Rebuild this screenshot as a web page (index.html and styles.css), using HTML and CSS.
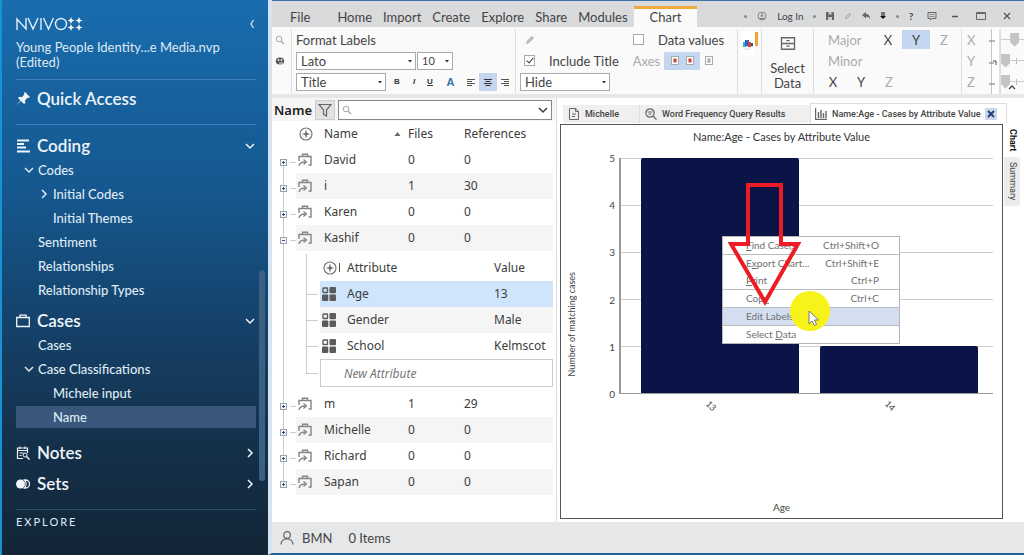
FILE: index.html
```html
<!DOCTYPE html>
<html lang="en">
<head>
<meta charset="utf-8">
<meta name="viewport" content="width=device-width, initial-scale=1">
<title>NVivo - Name:Age</title>
<link rel="stylesheet" href="styles.css">
</head>
<body>
<svg class="defs" aria-hidden="true">
  <symbol id="down" viewBox="0 0 10 10"><path d="M1 3l4 4 4-4" fill="none" stroke="currentColor" stroke-width="1.5"/></symbol>
  <symbol id="right" viewBox="0 0 10 10"><path d="M3 1l4 4-4 4" fill="none" stroke="currentColor" stroke-width="1.5"/></symbol>
  <symbol id="caret" viewBox="0 0 6 4"><path d="M1 1h4L3 3.500z" fill="#333"/></symbol>
  <symbol id="plus" viewBox="0 0 7 7"><rect x=".5" y=".5" width="6" height="6" fill="#f4f6fa" stroke="#9aa2b2"/><path d="M2 3.500h3M3.500 2v3" stroke="#34507c"/></symbol>
  <symbol id="minus" viewBox="0 0 7 7"><rect x=".5" y=".5" width="6" height="6" fill="#f4f6fa" stroke="#9aa2b2"/><path d="M2 3.500h3" stroke="#34507c"/></symbol>
  <symbol id="case" viewBox="0 0 14 14"><path d="M1 8V3.500h12V12h-2.500M4.500 3.500V1.200h5v2.300" fill="none" stroke="#858585" stroke-width="1.400"/><path d="M1 13c.5-3 2.500-4 6-4M5.500 6.500L8.500 9l-3 2.500" fill="none" stroke="#858585" stroke-width="1.300"/></symbol>
  <symbol id="attr" viewBox="0 0 14 14"><rect x="1" y="1" width="4.500" height="4.500" rx=".5" fill="none" stroke="#5b5b5b" stroke-width="1.400"/><rect x="7.500" y="0" width="6.500" height="6.300" rx="1" fill="#5b5b5b"/><rect y="7.500" width="6.300" height="6.500" rx="1" fill="#5b5b5b"/><rect x="7.500" y="7.500" width="6.500" height="6.500" rx="1" fill="#5b5b5b"/></symbol>
  <symbol id="target" viewBox="0 0 14 14"><circle cx="7" cy="7" r="6" fill="none" stroke="#777" stroke-width="1.200"/><path d="M7 3.500v7M3.500 7h7" stroke="#666" stroke-width="1.200"/><path d="M7 5l2 2-2 2-2-2z" fill="#666"/></symbol>
  <symbol id="lens" viewBox="0 0 10 10"><circle cx="4" cy="4" r="2.800" fill="none" stroke="#aaa"/><path d="M6 6l3 3" stroke="#aaa" stroke-width="1.500"/></symbol>
  <symbol id="pencil" viewBox="0 0 10 10"><path d="M1 9l1-3 5-5 2 2-5 5z" fill="#a9a9a9"/><path d="M2.500 7.500l5-5" stroke="#eee" stroke-width=".8"/></symbol>
  <symbol id="axis" viewBox="0 0 8 9"><rect x=".5" y=".5" width="7" height="8" fill="#fff" stroke="#aaa"/><path d="M2 2.500h4M2 6.500h4" stroke="#ccc"/><rect x="2.500" y="3" width="3" height="3" fill="currentColor"/></symbol>
</svg>
<div class="app">
  <nav class="side" aria-label="Navigation">
    <div class="brand">
      <svg class="logo" viewBox="0 0 68 14" role="img" aria-label="NVivo">
        <g fill="none" stroke="#e3eef8" stroke-width="1.400"><path d="M1 13V2l9 10V1M12 1l5 11 5-11M25 1v12M27.500 1l5 11 5-11"/><circle cx="45" cy="7" r="5.500"/></g>
        <g fill="#fff"><path d="M55 0l1 2.500L58.500 3.500 56 4.500 55 7 54 4.500 51.500 3.500 54 2.500zM63 0l1 2.500L66.500 3.500 64 4.500 63 7 62 4.500 59.500 3.500 62 2.500zM55 7l1 2.500 2.500 1L56 11.500 55 14l-1-2.500-2.500-1L54 9.500zM63 7l1 2.500 2.500 1L64 11.500 63 14l-1-2.500-2.500-1L62 9.500z"/><path d="M53 3h4v1h-4zM61 3h4v1h-4zM53 10h4v1h-4zM61 10h4v1h-4z"/></g>
      </svg>
      <button class="plain" aria-label="Collapse"><svg class="i8" viewBox="0 0 8 8"><path d="M5.500 0L3 4l2.500 4" fill="none" stroke="#d7e5f2" stroke-width="1.300"/></svg></button>
    </div>
    <p class="project">Young People Identity...e Media.nvp (Edited)</p>
    <a class="head quick" href="#"><svg class="i14" viewBox="0 0 14 14"><path d="M9 0l5 5-1.500 1-1-.3L9 8.500l.3 2.500L8 12 5 9l-5 4.500L4.500 8.500 2 6l1.200-1.200 2.600.4L8.300 2.500 8 1z" fill="currentColor"/></svg><span>Quick Access</span></a>
    <a class="head coding" href="#"><svg class="i14" viewBox="0 0 14 14"><path d="M1 1.500h12M1 5h7M1 8.500h9M1 12.500h13" stroke="currentColor" stroke-width="2"/></svg><span>Coding</span><svg class="i10"><use href="#down"/></svg></a>
    <a class="item l1" href="#"><svg class="i10"><use href="#down"/></svg>Codes</a>
    <a class="item l2" href="#"><svg class="i10"><use href="#right"/></svg>Initial Codes</a>
    <a class="item l2 leaf" href="#">Initial Themes</a>
    <a class="item l1 leaf" href="#">Sentiment</a>
    <a class="item l1 leaf" href="#">Relationships</a>
    <a class="item l1 leaf" href="#">Relationship Types</a>
    <a class="head cases" href="#"><svg class="i14" viewBox="0 0 14 14"><path d="M.7 3.500h12.600v9H.7zM4 3.500V1.200h6v2.300" fill="none" stroke="currentColor" stroke-width="1.300"/></svg><span>Cases</span><svg class="i10"><use href="#down"/></svg></a>
    <a class="item l1 leaf" href="#">Cases</a>
    <a class="item l1" href="#"><svg class="i10"><use href="#down"/></svg>Case Classifications</a>
    <a class="item l2 leaf" href="#">Michele input</a>
    <a class="item l2 leaf current" href="#" aria-current="page">Name</a>
    <a class="head notes" href="#"><svg class="i14" viewBox="0 0 14 14"><path d="M7 12.500H1.500V2h10v5M1.500 4.500h10M4 .5V3M9 .5V3M3.500 7h4M3.500 9.500h2" fill="none" stroke="currentColor" stroke-width="1.200"/><circle cx="9" cy="9" r="2" fill="none" stroke="currentColor"/><path d="M10.500 10.500l3 3" stroke="currentColor" stroke-width="1.400"/></svg><span>Notes</span><svg class="i10"><use href="#right"/></svg></a>
    <a class="head sets" href="#"><svg class="i14" viewBox="0 0 14 14"><circle cx="4.500" cy="7" r="4.500" fill="currentColor"/><path d="M8.500 3h1a4 4 0 010 8h-1a6 6 0 000-8z" fill="none" stroke="currentColor" stroke-width="1.300"/></svg><span>Sets</span><svg class="i10"><use href="#right"/></svg></a>
    <p class="section">EXPLORE</p>
    <i class="thumb"></i>
  </nav>

  <div class="work">
    <header class="tabs">
      <a href="#" class="file">File</a><a href="#">Home</a><a href="#">Import</a><a href="#">Create</a><a href="#">Explore</a><a href="#">Share</a><a href="#">Modules</a><a href="#" class="on">Chart</a>
      <div class="tools">
        <i class="dot"></i>
        <svg class="i10" viewBox="0 0 10 10"><circle cx="5" cy="5" r="4" fill="none" stroke="#888"/><path d="M2.500 7.500h5M5 2v3M3.500 5h3" stroke="#777"/></svg>
        <a class="login" href="#">Log In</a>
        <i class="dot"></i>
        <button class="plain" aria-label="Save"><svg class="i8" viewBox="0 0 8 8"><path d="M0 0h7l1 1v7H0z" fill="#666"/><path d="M2.500 0h3v2.500h-3zM2 5h4v3H2z" fill="#ccc"/></svg></button>
        <button class="plain" aria-label="Edit"><svg class="i8"><use href="#pencil"/></svg></button>
        <button class="plain" aria-label="Undo"><svg class="i8" viewBox="0 0 8 8"><path d="M4 0v2q4 0 4 5Q7 4.500 4 4.500V6.500L0 3z" fill="#666"/></svg></button>
        <button class="plain" aria-label="More"><svg class="i6" viewBox="0 0 6 8"><path d="M1 1h4M1 3h4" stroke="#111"/><path d="M0 4h6L3 7z" fill="#111"/></svg></button>
        <i class="dot"></i>
        <button class="plain help">?</button>
        <button class="plain talk" aria-label="Feedback"><svg class="i10" viewBox="0 0 10 10"><path d="M1 1.500h8v6H5L3.500 9V7.500H1z" fill="none" stroke="#666"/><path d="M2.500 3.500h5M2.500 5.500h5" stroke="#777" stroke-width=".8"/></svg></button>
        <button class="plain win" aria-label="Minimize"><svg class="i10" viewBox="0 0 10 10"><path d="M2 5.500h6" stroke="#555" stroke-width="1.500"/></svg></button>
        <button class="plain win" aria-label="Maximize"><svg class="i10" viewBox="0 0 10 10"><path d="M.5 1.500h9v7h-9zM.5 2.500h9" fill="none" stroke="#666"/></svg></button>
        <button class="plain win" aria-label="Close"><svg class="i10" viewBox="0 0 10 10"><path d="M2 2l6 6M8 2L2 8" stroke="#555" stroke-width="1.300"/></svg></button>
      </div>
    </header>

    <section class="ribbon" aria-label="Chart tools">
      <div class="group g-left">
        <svg class="i10"><use href="#lens"/></svg>
        <svg class="i10" viewBox="0 0 10 10"><ellipse cx="5" cy="5" rx="4.200" ry="3.600" fill="#555"/><circle cx="3.500" cy="4" r="1" fill="#eee"/><circle cx="6.500" cy="4" r="1" fill="#eee"/><path d="M4 7h4" stroke="#eee"/></svg>
      </div>
      <div class="group g-format">
        <div class="row">Format Labels</div>
        <div class="row">
          <span class="sel w-font"><select aria-label="Font"><option>Lato</option></select><svg><use href="#caret"/></svg></span>
          <span class="sel w-size"><select aria-label="Size"><option>10</option></select><svg><use href="#caret"/></svg></span>
        </div>
        <div class="row">
          <span class="sel w-part"><select aria-label="Label part"><option>Title</option></select><svg><use href="#caret"/></svg></span>
          <span class="marks">
            <button class="fmt b">B</button><button class="fmt it">I</button><button class="fmt u">U</button><button class="fmt a">A</button>
            <button class="fmt al" aria-label="Align left"><svg class="i8" viewBox="0 0 8 8"><path d="M0 1.500h8M0 3.500h5M0 5.500h8M0 7.500h5" stroke="#555"/></svg></button>
            <button class="fmt hot" aria-label="Align center"><svg class="i8" viewBox="0 0 8 8"><path d="M0 1.500h8M1.500 3.500h5M0 5.500h8M1.500 7.500h5" stroke="#333"/></svg></button>
            <button class="fmt al" aria-label="Align right"><svg class="i8" viewBox="0 0 8 8"><path d="M0 1.500h8M3 3.500h5M0 5.500h8M3 7.500h5" stroke="#555"/></svg></button>
          </span>
        </div>
      </div>
      <div class="group g-title">
        <div class="row"><svg class="i10 pen"><use href="#pencil"/></svg><label class="chk values"><input type="checkbox"><span>Data values</span></label></div>
        <div class="row"><label class="chk incl"><input type="checkbox" checked><span>Include Title</span></label><span class="dim">Axes</span><span class="pair"><button class="plain" aria-label="X axis"><svg class="ax"><use href="#axis"/></svg></button><button class="plain" aria-label="Y axis"><svg class="ax"><use href="#axis"/></svg></button></span><button class="plain off" aria-label="Z axis"><svg class="ax"><use href="#axis"/></svg></button></div>
        <div class="row"><span class="sel w-hide"><select aria-label="Legend"><option>Hide</option></select><svg><use href="#caret"/></svg></span></div>
      </div>
      <div class="group g-thumb"><svg class="preview" viewBox="0 0 18 24" role="img" aria-label="Chart type"><path d="M0 0h14v24H0z" fill="#fff"/><path d="M0 15.500h12M2 18h8" stroke="#d8dce0"/><path d="M2 11h3v5H2z" fill="#2bb5c9"/><path d="M4 9h4v6H4z" fill="#2a66bb"/><path d="M7 11h3v5H7z" fill="#e03b34"/><path d="M10 12h2v3h-2z" fill="#2b4fa0"/><path d="M14 1h3v14h-3z" fill="#f0a52d"/></svg></div>
      <button class="group g-select"><svg class="cab" viewBox="0 0 14 12"><path d="M1 .7h12v10.600H1zM1 6h12M5.500 3.300h3M5.500 8.500h3" fill="none" stroke="#666" stroke-width="1.200"/></svg>Select Data</button>
      <div class="group g-grid">
        <div class="row"><span class="dim lead">Major</span><button class="ltr">X</button><button class="ltr hot">Y</button><button class="ltr dim">Z</button></div>
        <div class="row"><span class="dim lead">Minor</span></div>
        <div class="row minor"><button class="ltr">X</button><button class="ltr">Y</button><button class="ltr dim">Z</button></div>
      </div>
      <div class="group g-rot">
        <label class="row dim" for="rx">X</label><label class="row dim" for="ry">Y</label><label class="row dim" for="rz">Z</label>
      </div>
      <svg class="strip" viewBox="0 0 12 67" aria-hidden="true"><path d="M2 0h9v67H2z" fill="#fff"/><path d="M2.500 0v67M11 0v67" stroke="#c4c4c4"/><path d="M0 12h6M0 34h5M0 55h6" stroke="#777"/><path d="M4 32h3v4" fill="none" stroke="#444"/></svg>
      <div class="g-slide">
        <input class="row" id="rx" type="range" value="18"><input class="row" id="ry" type="range" value="0"><input class="row" id="rz" type="range" value="0">
      </div>
      <button class="plain fold" aria-label="Collapse ribbon"><svg class="i8" viewBox="0 0 8 8"><path d="M1 6l3-3 3 3" fill="none" stroke="#444" stroke-width="1.300"/></svg></button>
    </section>

    <main class="body">
      <section class="list" aria-label="Cases">
        <div class="find">
          <h1>Name</h1>
          <button class="filter" aria-label="Filter"><svg class="i14" viewBox="0 0 14 14"><path d="M1 1.500h12L8.500 7v6l-3-1.500V7z" fill="#ddd" stroke="#666" stroke-width="1.200"/></svg></button>
          <label class="search"><svg class="i10"><use href="#lens"/></svg><input type="search" aria-label="Search"><svg class="i10 go"><use href="#down"/></svg></label>
        </div>
        <table class="tree">
          <colgroup><col class="c1"><col class="c2"><col class="c3"><col class="c4"><col></colgroup>
          <thead><tr><td></td><td><svg class="i14 hd"><use href="#target"/></svg></td><th><span class="sort">Name<svg viewBox="0 0 6 4"><path d="M0 4h6L3 0z" fill="#666"/></svg></span></th><th>Files</th><th>References</th></tr></thead>
          <tbody>
            <tr><td class="ex first"><button class="plain" aria-label="Expand"><svg class="box"><use href="#plus"/></svg></button></td><td><svg class="i14"><use href="#case"/></svg></td><td>David</td><td>0</td><td>0</td></tr>
            <tr class="alt"><td class="ex"><button class="plain" aria-label="Expand"><svg class="box"><use href="#plus"/></svg></button></td><td><svg class="i14"><use href="#case"/></svg></td><td>i</td><td>1</td><td>30</td></tr>
            <tr><td class="ex"><button class="plain" aria-label="Expand"><svg class="box"><use href="#plus"/></svg></button></td><td><svg class="i14"><use href="#case"/></svg></td><td>Karen</td><td>0</td><td>0</td></tr>
            <tr class="alt"><td class="ex"><button class="plain" aria-label="Collapse"><svg class="box"><use href="#minus"/></svg></button></td><td><svg class="i14"><use href="#case"/></svg></td><td>Kashif</td><td>0</td><td>0</td></tr>
            <tr><td class="ex through"></td><td colspan="4" class="nest">
              <table class="attrs">
                <colgroup><col class="a1"><col class="a2"><col><col class="a4"></colgroup>
                <thead><tr><td class="br down"></td><td><span class="sort"><svg class="i14"><use href="#target"/></svg><i class="tick"></i></span></td><th>Attribute</th><th>Value</th></tr></thead>
                <tbody>
                  <tr class="sel-row"><td class="br"></td><td><svg class="i14"><use href="#attr"/></svg></td><td>Age</td><td>13</td></tr>
                  <tr class="alt"><td class="br"></td><td><svg class="i14"><use href="#attr"/></svg></td><td>Gender</td><td>Male</td></tr>
                  <tr><td class="br"></td><td><svg class="i14"><use href="#attr"/></svg></td><td>School</td><td>Kelmscot</td></tr>
                  <tr class="new"><td class="br last"></td><td colspan="3"><input type="text" placeholder="New Attribute" aria-label="New Attribute"></td></tr>
                </tbody>
              </table>
            </td></tr>
            <tr><td class="ex"><button class="plain" aria-label="Expand"><svg class="box"><use href="#plus"/></svg></button></td><td><svg class="i14"><use href="#case"/></svg></td><td>m</td><td>1</td><td>29</td></tr>
            <tr class="alt"><td class="ex"><button class="plain" aria-label="Expand"><svg class="box"><use href="#plus"/></svg></button></td><td><svg class="i14"><use href="#case"/></svg></td><td>Michelle</td><td>0</td><td>0</td></tr>
            <tr><td class="ex"><button class="plain" aria-label="Expand"><svg class="box"><use href="#plus"/></svg></button></td><td><svg class="i14"><use href="#case"/></svg></td><td>Richard</td><td>0</td><td>0</td></tr>
            <tr class="alt"><td class="ex end"><button class="plain" aria-label="Expand"><svg class="box"><use href="#plus"/></svg></button></td><td><svg class="i14"><use href="#case"/></svg></td><td>Sapan</td><td>0</td><td>0</td></tr>
          </tbody>
        </table>
      </section>

      <section class="detail" aria-label="Detail">
        <div class="docs">
          <a class="doc d1" href="#"><svg class="i12" viewBox="0 0 12 12"><path d="M1.500.5h6l3 3v8h-9zM7.500.5v3h3M4 6h4M4 8.500h3" fill="none" stroke="#666"/></svg>Michelle</a>
          <a class="doc d2" href="#"><svg class="i12" viewBox="0 0 12 12"><circle cx="5" cy="5" r="4.200" fill="none" stroke="#666" stroke-width="1.200"/><path d="M8 8l3.500 3.500M2.500 4h5M3.500 6h3" stroke="#666" stroke-width="1.200"/></svg>Word Frequency Query Results</a>
          <div class="doc d3"><svg class="i12" viewBox="0 0 12 12"><path d="M.5 0v11.500H12M3.500 4v6M6 2v8M8.500 5v5M11 3v7" fill="none" stroke="#666" stroke-width="1.400"/></svg><a href="#">Name:Age - Cases by Attribute Value</a><button class="plain x" aria-label="Close tab"><svg class="i8" viewBox="0 0 8 8"><path d="M1 1l6 6M7 1L1 7" stroke="#1c3f7c" stroke-width="1.800"/></svg></button></div>
        </div>
        <div class="view">
          <figure class="chart">
            <figcaption>Name:Age - Cases by Attribute Value</figcaption>
            <div class="ytitle"><span>Number of matching cases</span></div>
            <div class="yaxis"><span>5</span><span>4</span><span>3</span><span>2</span><span>1</span><span>0</span></div>
            <div class="plot">
              <div class="lines"><i></i><i></i><i></i><i></i><i></i></div>
              <div class="bars"><i style="height:100%"></i><i style="height:20%"></i></div>
            </div>
            <div class="xaxis"><span>13</span><span>14</span></div>
            <div class="xtitle">Age</div>
            <div class="menu" role="menu">
              <button role="menuitem"><span><u>F</u>ind Case(s)</span><kbd>Ctrl+Shift+O</kbd></button><hr>
              <button role="menuitem"><span>E<u>x</u>port Chart...</span><kbd>Ctrl+Shift+E</kbd></button>
              <button role="menuitem"><span><u>P</u>rint</span><kbd>Ctrl+P</kbd></button><hr>
              <button role="menuitem"><span>Cop<u>y</u></span><kbd>Ctrl+C</kbd></button><hr>
              <button role="menuitem" class="hover"><span>Edit Labels</span></button><hr>
              <button role="menuitem"><span>Select <u>D</u>ata</span></button>
            </div>
            <svg class="pointer" viewBox="0 0 110 160" aria-hidden="true">
              <circle cx="82" cy="131" r="20" fill="#f7f21a"/>
              <path d="M81 131v13l3-3 2.500 4.500 2-1-2-4.500h4z" fill="#fff" stroke="#777"/>
              <path d="M20 5h33v59h17L37 122 3 64h17z" fill="none" stroke="#ed1c24" stroke-width="4"/>
            </svg>
          </figure>
          <div class="vtabs"><a href="#" class="on">Chart</a><a href="#">Summary</a></div>
        </div>
      </section>
    </main>
    <footer class="status"><svg class="i14" viewBox="0 0 14 14"><circle cx="7" cy="4" r="3.300" fill="none" stroke="#666" stroke-width="1.200"/><path d="M1 13.500c.5-7.500 11.500-7.500 12 0" fill="none" stroke="#666" stroke-width="1.200"/></svg><span>BMN</span><span>0 Items</span></footer>
  </div>
</div>
</body>
</html>
```

FILE: styles.css
```css
*{box-sizing:border-box}
body{margin:0;font:13px/16px Lato,"Liberation Sans",sans-serif;color:#444;background:#fff}
a{color:inherit;text-decoration:none}
p,h1,figure{margin:0}
button,input,select{font:inherit;color:inherit;margin:0}
svg{display:block;flex:none}
.defs{position:absolute;width:0;height:0}
.i6{width:6px;height:8px}
.i8{width:8px;height:8px}
.i10{width:10px;height:10px}
.i12{width:12px;height:12px}
.i14{width:14px;height:14px}
.plain{display:grid;place-items:center;padding:0;border:0;background:none}
.app{display:flex;min-height:100vh}

/* Navigation */
.side{position:relative;flex:none;width:268px;padding:16px 12px 16px 14px;border-left:2px solid #1593d2;color:#dfeaf4;background:linear-gradient(#196cae 0,#15588f 34%,#15426a 58%,#14304a 80%,#132536 100%)}
.brand{display:flex;align-items:center;justify-content:space-between;height:16px;margin-bottom:8px}
.logo{width:68px;height:14px}
.project{width:208px;height:40px;line-height:15px;font-size:13px}
.head{display:flex;align-items:center;gap:7px;height:32px;font-size:17px;font-weight:600;line-height:24px;color:#eef4fa}
.head span{flex:1}
.head>svg:last-child{margin-right:1px}
.quick{height:46px;margin-top:-1px;padding-bottom:7px;border:solid #3c80b7;border-width:1px 0}
.coding{height:33px;padding-top:9px}
.cases{height:31px;padding-top:6px}
.notes{height:30px;margin-top:10px}
.sets{height:32px}
.item{display:flex;align-items:center;gap:4px;height:24px;font-size:13px;font-weight:500}
.l1{padding-left:8px}
.l2{padding-left:23px}
.l1.leaf{padding-left:22px}
.l2.leaf{padding-left:37px}
.current{height:22px;margin-top:1px;background:#38577a}
.section{margin-top:9px;padding-top:5px;border-top:1px solid #2a4e6d;font-size:11px;letter-spacing:2px;line-height:14px}
.thumb{position:absolute;right:3px;top:270px;width:6px;height:211px;border-radius:3px;background:#3a6184}

/* Window tabs */
.work{flex:1;min-width:0;display:flex;flex-direction:column;border-left:4px solid #d5e4f0;border-bottom:2px solid #1e649c}
.tabs{display:flex;align-items:stretch;gap:11px;height:27px;padding-left:18px;border-top:1px solid #3f6fa8;background:#d9dadc;font-size:13px;line-height:32px}
.tabs .file{margin-right:16px}
.tabs .on{align-self:flex-end;height:21px;margin-left:-5px;padding:0 16px;border-top:3px solid #f1a93b;background:#fafafa;line-height:16px}
.tools{display:flex;align-items:center;flex:1;justify-content:space-between;min-width:0;padding:4px 9px 0 36px;font-size:10px;line-height:14px}
.dot{width:3px;height:3px;border-radius:50%;background:#888}
.help{font-weight:700}
.talk{margin-left:4px}
.win{width:16px}

/* Ribbon */
.ribbon{position:relative;display:flex;height:71px;padding-top:2px;border-bottom:4px solid #e6e7e8;background:#fafafa;overflow:hidden}
.group{flex:none;display:flex;flex-direction:column;height:64px;padding:0;border:0;border-right:1px solid #ddd;background:none}
.row{display:flex;align-items:center;flex:none;height:21px}
.dim{color:#aaa}
.hot{background:#c5d6f0!important}
.g-left{width:20px;padding:6px 0 0 3px;gap:11px}
.g-format{width:224px;padding-left:4px}
.sel{display:grid;align-items:center;flex:none;height:18px;border:1px solid #aaa;background:#fff}
.sel>*{grid-area:1/1}
.sel svg{width:6px;height:4px;justify-self:end;margin-right:2px;pointer-events:none}
.sel select{appearance:none;width:100%;height:16px;border:0;background:none;padding:0 4px;line-height:16px}
.w-font{width:120px}
.w-size{width:36px;margin-left:1px;font-size:11px}
.w-part,.w-hide{width:90px}
.marks{display:flex;align-items:center;margin-left:2px}
.fmt{display:grid;place-items:center;flex:none;width:18px;height:18px;padding:0;border:0;background:none;font:700 8px/10px "Liberation Sans",sans-serif;color:#333}
.it{width:16px;font-style:italic}
.u{width:16px;text-decoration:underline}
.a{width:25px;font-size:11px;color:#3a6fa8}
.al{width:16px}
.g-title{width:222px;padding-left:4px}
.pen{margin:0 98px 0 5px}
.chk{display:flex;align-items:center}
.chk input{appearance:none;display:grid;width:11px;height:11px;border:1px solid #aaa;background:#fff}
.chk input:checked::before{content:"";width:3px;height:6px;margin-left:3px;border:solid #333;border-width:0 1px 1px 0;transform:rotate(40deg)}
.values{gap:14px}
.incl{gap:14px;margin:0 14px 0 4px}
.pair{display:flex;justify-content:space-evenly;align-items:center;width:36px;height:18px;margin:0 5px 0 4px;background:#c5d6f0;color:#d8342c}
.off{color:#aaa}
.ax{width:8px;height:9px}
.g-thumb{width:24px;padding:2px 0 0 3px}
.preview{width:18px;height:24px}
.g-select{width:52px;align-items:center;padding:8px 6px 0;line-height:15px;text-align:center}
.cab{width:16px;height:13px;margin-bottom:11px}
.g-grid{width:148px;padding-left:5px}
.lead{width:55px;padding-left:9px}
.ltr{width:28px;height:19px;padding:0;border:0;background:none}
.g-rot{width:27px;border:0;padding-left:5px}
.strip{width:12px;height:67px}
.g-slide{flex:1;min-width:0;overflow:hidden}
.g-slide input{appearance:none;width:60px;height:21px;background:linear-gradient(#ccc,#ccc) 0 50%/100% 1px no-repeat,linear-gradient(#bbb,#bbb) 15px 50%/1px 6px no-repeat}
.g-slide input::-webkit-slider-thumb{appearance:none;width:9px;height:14px;background:#c4c4c4;clip-path:polygon(0 0,100% 0,100% 70%,50% 100%,0 70%)}
.fold{position:absolute;right:8px;bottom:3px}

/* Case list */
.body{flex:1;display:flex;min-height:0}
.list{flex:none;width:285px;border-right:1px solid #ddd;font-family:"Noto Sans","Open Sans",sans-serif;font-size:12px;color:#3c3c3c}
.find{display:flex;align-items:center;height:23px;padding:0 4px 0 2px;background:#f6f6f6}
.find h1{flex:none;width:41px;font-size:13px;font-weight:600;line-height:18px;color:#222}
.filter{display:grid;place-items:center;flex:none;width:20px;height:20px;margin-right:3px;padding:0;border:1px solid #ccc;background:#e2e2e2}
.search{display:flex;align-items:center;flex:1;min-width:0;height:20px;padding:0 3px;border:1px solid #888;background:#fff}
.search input{flex:1;min-width:0;border:0;padding:0 4px;height:16px;outline:0;background:none}
.tree,.attrs{width:100%;border-collapse:collapse;table-layout:fixed;text-align:left}
.tree{width:281px}
td,th{height:26px;padding:0;font-weight:400;line-height:18px}
.c1{width:24px}.c2{width:28px}.c3{width:84px}.c4{width:56px}
.tree td>.i14{margin-left:2px}
.tree td>.hd{margin-left:3px}
.sort{display:flex;align-items:center;justify-content:space-between}
th .sort svg{width:7px;height:4px;margin-right:7px}
.alt td:not(.ex):not(.br){background:#f5f5f5}
.ex{background:linear-gradient(#ccc,#ccc) 11px 0/1px 100% no-repeat,linear-gradient(#ccc,#ccc) 18px 15px/6px 1px no-repeat}
.ex.first{background-position:11px 15px,18px 15px}
.ex.end{background-size:1px 13px,6px 1px}
.ex.through{background:linear-gradient(#ccc,#ccc) 11px 0/1px 100% no-repeat}
.ex button{margin:4px 0 0 8px}
.box{width:7px;height:7px}
.nest{padding:3px 0 4px 10px}
.attrs .a1{width:14px}.attrs .a2{width:27px}.attrs .a4{width:59px}
.attrs thead td,.attrs thead th{height:27px}
.attrs td>.i14{margin-left:2px}
.attrs .sort{justify-content:flex-start;margin-left:3px;gap:2px}
.tick{width:1px;height:9px;background:#555}
.br{background:linear-gradient(#ccc,#ccc) 0 0/1px 100% no-repeat,linear-gradient(#ccc,#ccc) 0 13px/12px 1px no-repeat}
.br.down{background-size:1px 100%,0 0}
.br.last{background-size:1px 14px,12px 1px;background-position:0 0,0 14px}
.sel-row td:not(.br){background:#cfe5fc}
.new td{height:28px;vertical-align:bottom}
.new input{display:block;width:100%;height:28px;padding:0 23px;border:1px solid #ccc;background:#fff}
.new input::placeholder{font-style:italic;color:#777;opacity:1}

/* Detail view */
.detail{flex:1;min-width:0;display:flex;flex-direction:column;padding:4px 1px 3px 3px}
.docs{display:flex;align-items:flex-end;height:22px;padding:0 16px 1px 3px;font:500 9px/14px Roboto,"Liberation Sans",sans-serif;color:#444}
.doc{display:flex;align-items:center;gap:5px;height:18px;padding-left:5px;background:#efefef}
.d1{flex:0 1 76px}
.d2{flex:1 1 0;border-left:1px solid #ddd}
.d3{flex:none;width:197px;height:20px;padding:0 9px 0 4px;border:1px solid #ddd;border-bottom:0;background:#fff}
.d3 a{flex:1;white-space:nowrap}
.x{width:13px;height:12px;background:#ccd6e6}
.view{flex:1;display:flex}
.chart{position:relative;flex:1;min-width:0;display:grid;grid-template:33px minmax(200px,1fr) 100px 24px/22px 36px 1fr;padding-right:9px;border:1px solid #555;background:#fff;font:10px/14px Lato,sans-serif;color:#444}
.chart figcaption{grid-column:1/-1;padding:5px 0 0 9px;font-size:11px;text-align:center;color:#333}
.ytitle{grid-area:2/1/4/2;display:flex;align-items:center;justify-content:center;height:332px;writing-mode:vertical-rl;white-space:nowrap;font-size:9px}
.ytitle span{transform:rotate(180deg)}
.yaxis{grid-area:2/2;display:flex;flex-direction:column;justify-content:space-between;align-items:flex-end;margin:-7px 4px -7px 0}
.plot{grid-area:2/3;display:grid;border-left:2px solid #999;border-bottom:1px solid #999}
.plot>*{grid-area:1/1}
.lines{display:flex;flex-direction:column}
.lines i{flex:1;border-top:1px solid #ccc}
.bars{display:flex;align-items:flex-end;gap:21px;padding:0 15px 0 20px}
.bars i{flex:1;background:#0b1446;border-radius:2px 2px 0 0}
.xaxis{grid-area:3/3;display:flex;gap:21px;padding:5px 24px 0 13px}
.xaxis span{flex:1;display:flex;justify-content:center;height:14px;font-size:9px;transform:rotate(45deg)}
.xtitle{grid-area:4/1/5/-1;padding:6px 0 0 9px;text-align:center}
.menu{position:absolute;left:161px;top:111px;width:178px;border:1px solid #b5b5b5;background:#fff;font:10px/16px Lato,sans-serif;color:#707070}
.menu button{display:flex;justify-content:space-between;width:100%;height:17px;padding:0 20px 0 23px;border:0;background:none;line-height:16px}
.menu kbd{font:inherit}
.menu hr{height:1px;margin:0;border:0;background:#bbb}
.menu .hover{background:#d3dff1}
.pointer{position:absolute;left:167px;top:55px;width:110px;height:160px;pointer-events:none}
.vtabs{flex:none;width:20px;display:flex;flex-direction:column;padding:4px 3px 0 1px;gap:2px;font:9px/14px Roboto,"Liberation Sans",sans-serif;color:#444}
.vtabs a{writing-mode:vertical-rl;padding:1px 0 4px;border-radius:0 3px 3px 0;line-height:15px}
.vtabs a:last-child{padding:5px 0;background:#ececec}
.vtabs .on{font-weight:700;color:#111}

.status{display:flex;align-items:center;gap:8px;height:31px;padding-left:8px;background:#e5e7e8;font-size:13px}
.status span:last-child{margin-left:8px}
```
